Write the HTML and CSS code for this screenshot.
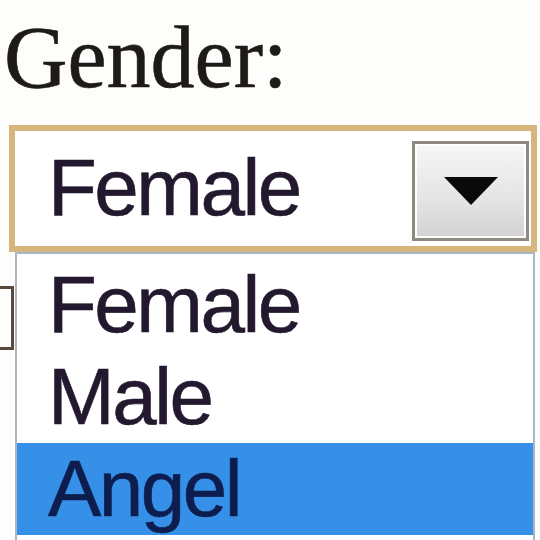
FILE: index.html
```html
<!DOCTYPE html>
<html lang="en">
<head>
    <meta charset="UTF-8">
    <meta name="viewport" content="width=device-width, initial-scale=1.0">
    <title>Gender</title>
    <link rel="stylesheet" href="styles.css">
</head>
<body>

    <div class="field">
        <!-- label -->
        <div class="label">Gender:</div>

        <!-- closed select -->
        <div class="select">
            <div class="select-value">Female</div>
            <div class="select-btn">
                <svg width="58" height="34" viewBox="0 0 58 34">
                    <polygon points="2,3 56,3 29,31" fill="#0a0a0a"/>
                </svg>
            </div>
        </div>

        <!-- open options -->
        <div class="popup">
            <div class="stub"><span class="bracket"></span></div>
            <ul class="options">
                <li>Female</li>
                <li>Male</li>
                <li class="active">Angel</li>
            </ul>
        </div>
    </div>

</body>
</html>
```

FILE: styles.css
```css
body {
    margin: 0;
    background-color: #fdfdfc;
    overflow: hidden;
}
.field {
    padding-top: 8px;
}
.label {
    padding-left: 4px;
    font-family: "Liberation Serif", serif;
    font-size: 88px;
    line-height: 100px;
    color: #1d1a18;
    -webkit-text-stroke: 0.6px #1d1a18;
}
.select {
    display: flex;
    height: 115px;
    margin: 17px 3px 0 9px;
    border: 6px solid #d7b67e;
    background-color: #fff;
}
.select-value {
    flex: 1;
    padding: 10px 0 0 33px;
    font-family: "Liberation Sans", Arial, sans-serif;
    font-size: 80px;
    letter-spacing: -2.5px;
    line-height: 93px;
    color: #22192e;
    -webkit-text-stroke: 0.6px #22192e;
}
.select-btn {
    width: 111px;
    margin: 10px 2px 5px 0;
    border: 3px solid #8e8a80;
    background: linear-gradient(#f6f6f6, #e4e4e4 60%, #d2d2d2);
    box-shadow: inset 0 0 0 2px #fff;
    display: flex;
    align-items: center;
    justify-content: center;
}
.popup {
    display: flex;
}
.stub {
    width: 15px;
}
.stub .bracket {
    display: block;
    width: 11px;
    height: 58px;
    margin-top: 34px;
    border: 3px solid #5b4a3c;
    border-left: 0;
}
.options {
    flex: 1;
    margin: 0 5px 0 0;
    padding: 5px 0 0 0;
    list-style: none;
    border: 2px solid #aab5c8;
    border-bottom: 0;
    height: 300px;
    background-color: #fff;
}
.options li {
    padding-left: 31px;
    font-family: "Liberation Sans", Arial, sans-serif;
    font-size: 80px;
    letter-spacing: -2.5px;
    line-height: 92px;
    color: #22192e;
    -webkit-text-stroke: 0.6px #22192e;
}
.options li.active {
    background-color: #3790e8;
    color: #0c1d4e;
    -webkit-text-stroke-color: #0c1d4e;
}
```
